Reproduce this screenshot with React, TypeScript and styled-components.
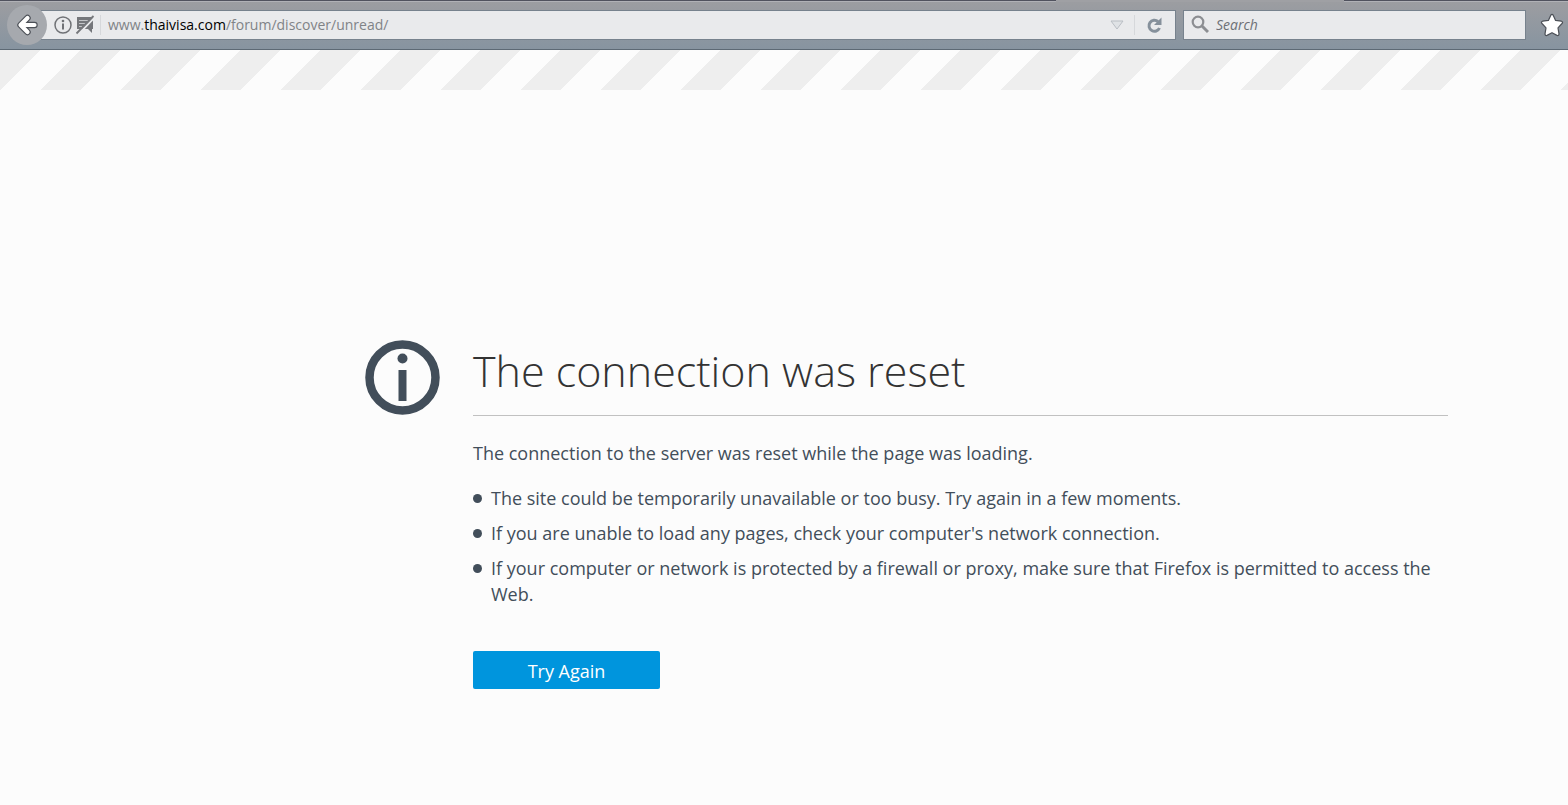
import React from "react";
import styled, { createGlobalStyle } from "styled-components";

const GlobalStyle = createGlobalStyle`
  * { box-sizing: border-box; }
  body {
    margin: 0;
    background: #fcfcfc;
    color: #424e5a;
    font-family: "Open Sans", "Noto Sans", sans-serif;
  }
`;

const Shell = styled.div`
  min-height: 100vh;
  display: flex;
  flex-direction: column;
`;

const TabStrip = styled.div`
  height: 2px;
  display: flex;
  justify-content: flex-end;
  background: #50525e;
  border-bottom: 1px solid #b0b1b6;
`;

const ActiveTab = styled.div`
  width: 288px;
  height: 2px;
  margin-right: 224px;
  background: #9fa0a4;
`;

const Toolbar = styled.header`
  height: 48px;
  display: flex;
  align-items: center;
  padding: 0 4px 1px 7px;
  background: linear-gradient(#9c9da1, #8794a0);
  border-bottom: 1px solid #5d6974;
`;

const BackButton = styled.button`
  width: 40px;
  height: 40px;
  flex: none;
  display: grid;
  place-items: center;
  padding: 0;
  border: 0;
  border-radius: 50%;
  background: #a6a9ae;
  z-index: 1;
`;

const Field = styled.div<{ $width?: number }>`
  height: 30px;
  display: flex;
  align-items: center;
  border: 1px solid #77828d;
  background: #e9eaec;
  ${(p) => (p.$width ? `width: ${p.$width}px; flex: none;` : "flex: 1; min-width: 0;")}
`;

const AddressField = styled(Field)`
  margin-left: -8px;
  margin-right: 7px;
  padding-left: 14px;
`;

const SearchField = styled(Field)`
  padding-left: 7px;
  gap: 7px;
`;

const PlainButton = styled.button`
  flex: none;
  display: grid;
  place-items: center;
  padding: 0;
  border: 0;
  background: none;
`;

const Divider = styled.span`
  width: 1px;
  height: 20px;
  background: #d6d8db;
`;

const AddressDivider = styled(Divider)`
  margin: 0 7px 0 4px;
`;

const Address = styled.a`
  flex: 1;
  font-size: 14px;
  line-height: 20px;
  color: #808387;
  text-decoration: none;
  white-space: nowrap;

  b {
    font-weight: 400;
    color: #000;
  }
`;

const SearchInput = styled.input`
  flex: 1;
  min-width: 0;
  padding: 0;
  border: 0;
  outline: 0;
  background: none;
  font: italic 14px/20px "Open Sans", sans-serif;
  color: #000;

  &::placeholder {
    color: #6d7075;
    opacity: 1;
  }
`;

const StarButton = styled(PlainButton)`
  margin-left: 14px;
`;

const Stripes = styled.div`
  height: 40px;
  background: linear-gradient(
      135deg,
      #eee calc(100% / 3),
      #fcfcfc calc(100% / 3) calc(200% / 3),
      #eee calc(200% / 3)
    )
    1px 0 / 80px 40px;
`;

const Main = styled.main`
  display: flex;
  align-items: flex-start;
  gap: 33px;
  padding: 250px 120px 40px 365px;
`;

const Body = styled.div`
  flex: 1;
  min-width: 0;
  font-size: 18px;
  line-height: 26px;
`;

const Title = styled.h1`
  margin: 0 0 24px;
  height: 76px;
  border-bottom: 1px solid #c1c1c1;
  font-size: 43px;
  line-height: 62px;
  font-weight: 300;
  color: #333;
`;

const Lead = styled.p`
  margin: 0 0 19px;
`;

const Tips = styled.ul`
  margin: 0 0 44px;
  padding: 0;
  list-style: none;
`;

const Tip = styled.li`
  display: flex;
  gap: 9px;
  margin-bottom: 9px;

  &::before {
    content: "";
    flex: none;
    width: 9px;
    height: 9px;
    margin-top: 9px;
    border-radius: 50%;
    background: #424e5a;
  }
`;

const RetryButton = styled.button`
  width: 187px;
  height: 38px;
  padding: 2px 0 0;
  border: 0;
  border-radius: 2px;
  background: #0095dd;
  color: #fff;
  font: 18px/26px "Open Sans", sans-serif;
`;

const tips = [
  "The site could be temporarily unavailable or too busy. Try again in a few moments.",
  "If you are unable to load any pages, check your computer's network connection.",
  "If your computer or network is protected by a firewall or proxy, make sure that Firefox is permitted to access the Web.",
];

const ARROW = "M11.5 5L4.500 12L11.500 19M5.500 12H18.500";

export default function App() {
  return (
    <Shell>
      <GlobalStyle />
      <TabStrip>
        <ActiveTab />
      </TabStrip>
      <Toolbar>
        <BackButton aria-label="Back">
          <svg width="22" height="24" viewBox="0 0 22 24" fill="none" strokeLinejoin="round">
            <path d={ARROW} stroke="#4c5057" strokeWidth="6.4" strokeLinecap="round" />
            <path d={ARROW} stroke="#fff" strokeWidth="4.2" strokeLinecap="round" />
          </svg>
        </BackButton>
        <AddressField>
          <PlainButton aria-label="Site information">
            <svg width="18" height="18" viewBox="0 0 18 18">
              <circle cx="9" cy="9" r="8" fill="none" stroke="#707276" strokeWidth="1.5" />
              <circle cx="9" cy="5" r="1.300" fill="#707276" />
              <path d="M8 7.500h2v6h-2z" fill="#707276" />
            </svg>
          </PlainButton>
          <PlainButton aria-label="Notifications blocked">
            <svg width="24" height="20" viewBox="0 0 24 20">
              <path d="M5 2h16v12h-1v4l-4-4H5z" fill="#75777b" />
              <path d="M7 5.500h9M7 8.500h6M7 11.500h3" stroke="#c3c5c8" strokeWidth="1" />
              <path d="M6.500 19L22.500 2.500" stroke="#e9eaec" strokeWidth="2" />
              <path d="M4.500 18.500L21.500 1" stroke="#75777b" strokeWidth="1.8" />
            </svg>
          </PlainButton>
          <AddressDivider />
          <Address href="#">
            www.<b>thaivisa.com</b>/forum/discover/unread/
          </Address>
          <PlainButton aria-label="Show history">
            <svg width="34" height="20" viewBox="0 0 34 20">
              <path d="M11 6h12l-6 8z" fill="#dfe2e5" stroke="#b9bec4" />
            </svg>
          </PlainButton>
          <Divider />
          <PlainButton aria-label="Reload">
            <svg width="40" height="20" viewBox="0 0 40 20">
              <path d="M23 6.500A5.500 5.500 0 1 0 24.500 13" fill="none" stroke="#85909b" strokeWidth="3" />
              <path d="M26.500 2.500v7.500h-7.500z" fill="#85909b" />
            </svg>
          </PlainButton>
        </AddressField>
        <SearchField $width={343} role="search">
          <svg width="18" height="20" viewBox="0 0 18 20" aria-hidden="true">
            <circle cx="7" cy="7" r="5.300" fill="none" stroke="#8c8e92" strokeWidth="2.2" />
            <path d="M11 11l6 6" stroke="#8c8e92" strokeWidth="3" />
          </svg>
          <SearchInput aria-label="Search" placeholder="Search" />
        </SearchField>
        <StarButton aria-label="Bookmark this page">
          <svg width="24" height="24" viewBox="0 0 24 24">
            <path
              d="M10.800 2.200Q12 0.400 13.200 2.200L15.600 7.400L21.400 8.200Q23.400 8.800 22 10.500L18 14.800L19 20.800Q19 23 17 22.400L12 19.700L7 22.400Q5 23 5 20.800L6 14.800L2 10.500Q0.600 8.800 2.600 8.200L8.400 7.400Z"
              fill="#fff"
              stroke="#4c5057"
              strokeWidth="1.200"
              strokeLinejoin="round"
            />
          </svg>
        </StarButton>
      </Toolbar>
      <Stripes />
      <Main>
        <svg width="75" height="75" viewBox="0 0 75 75" aria-hidden="true">
          <circle cx="37.500" cy="37.500" r="33" fill="none" stroke="#424e5a" strokeWidth="8.5" />
          <circle cx="37.500" cy="18.500" r="5" fill="#424e5a" />
          <path d="M33.500 30h8v31h-8z" fill="#424e5a" />
        </svg>
        <Body>
          <Title>The connection was reset</Title>
          <Lead>The connection to the server was reset while the page was loading.</Lead>
          <Tips>
            {tips.map((tip) => (
              <Tip key={tip}>{tip}</Tip>
            ))}
          </Tips>
          <RetryButton>Try Again</RetryButton>
        </Body>
      </Main>
    </Shell>
  );
}
